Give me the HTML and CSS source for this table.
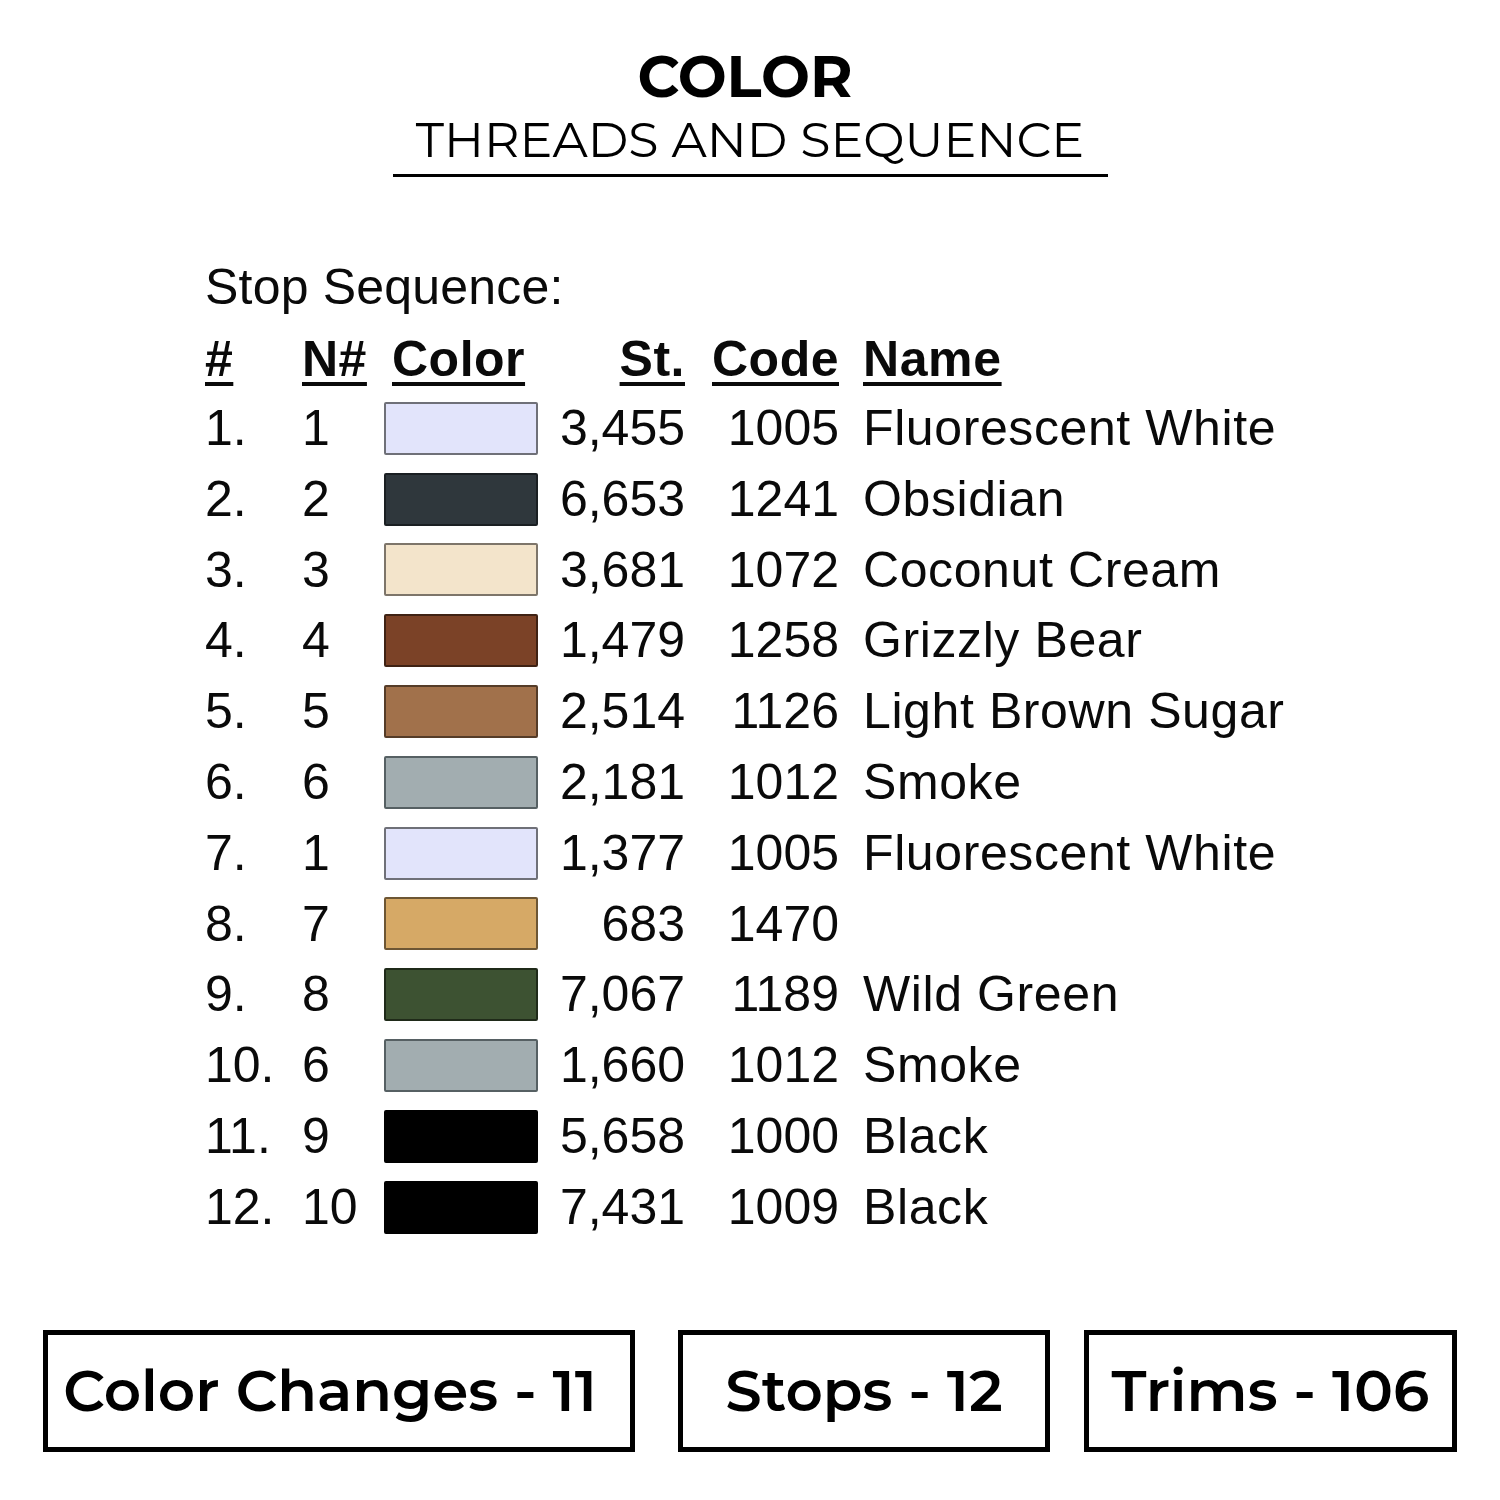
FILE: index.html
```html
<!DOCTYPE html>
<html lang="en">
<head>
<meta charset="utf-8">
<title>Color – Threads and Sequence</title>
<link rel="stylesheet" href="styles.css">
</head>
<body>
<div class="page">
  <header class="heading">
    <div class="title">COLOR</div>
    <div class="subtitle">THREADS AND SEQUENCE</div>
    <div class="rule"></div>
  </header>

  <section class="sequence">
    <div class="seq-label">Stop Sequence:</div>
    <div class="grid">
      <div class="hd c-num"><u>#</u></div>
      <div class="hd c-n"><u>N#</u></div>
      <div class="hd c-color"><u>Color</u></div>
      <div class="hd c-st"><u>St.</u></div>
      <div class="hd c-code"><u>Code</u></div>
      <div class="hd c-name"><u>Name</u></div>

      <div class="c-num">1.</div><div class="c-n">1</div><div class="c-color"><span class="sw sw-fwhite"></span></div><div class="c-st">3,455</div><div class="c-code">1005</div><div class="c-name">Fluorescent White</div>
      <div class="c-num">2.</div><div class="c-n">2</div><div class="c-color"><span class="sw sw-obsidian"></span></div><div class="c-st">6,653</div><div class="c-code">1241</div><div class="c-name">Obsidian</div>
      <div class="c-num">3.</div><div class="c-n">3</div><div class="c-color"><span class="sw sw-coconut"></span></div><div class="c-st">3,681</div><div class="c-code">1072</div><div class="c-name">Coconut Cream</div>
      <div class="c-num">4.</div><div class="c-n">4</div><div class="c-color"><span class="sw sw-grizzly"></span></div><div class="c-st">1,479</div><div class="c-code">1258</div><div class="c-name">Grizzly Bear</div>
      <div class="c-num">5.</div><div class="c-n">5</div><div class="c-color"><span class="sw sw-lbsugar"></span></div><div class="c-st">2,514</div><div class="c-code">1126</div><div class="c-name">Light Brown Sugar</div>
      <div class="c-num">6.</div><div class="c-n">6</div><div class="c-color"><span class="sw sw-smoke"></span></div><div class="c-st">2,181</div><div class="c-code">1012</div><div class="c-name">Smoke</div>
      <div class="c-num">7.</div><div class="c-n">1</div><div class="c-color"><span class="sw sw-fwhite"></span></div><div class="c-st">1,377</div><div class="c-code">1005</div><div class="c-name">Fluorescent White</div>
      <div class="c-num">8.</div><div class="c-n">7</div><div class="c-color"><span class="sw sw-1470"></span></div><div class="c-st">683</div><div class="c-code">1470</div><div class="c-name"></div>
      <div class="c-num">9.</div><div class="c-n">8</div><div class="c-color"><span class="sw sw-wgreen"></span></div><div class="c-st">7,067</div><div class="c-code">1189</div><div class="c-name">Wild Green</div>
      <div class="c-num">10.</div><div class="c-n">6</div><div class="c-color"><span class="sw sw-smoke"></span></div><div class="c-st">1,660</div><div class="c-code">1012</div><div class="c-name">Smoke</div>
      <div class="c-num">11.</div><div class="c-n">9</div><div class="c-color"><span class="sw sw-black"></span></div><div class="c-st">5,658</div><div class="c-code">1000</div><div class="c-name">Black</div>
      <div class="c-num">12.</div><div class="c-n">10</div><div class="c-color"><span class="sw sw-black"></span></div><div class="c-st">7,431</div><div class="c-code">1009</div><div class="c-name">Black</div>
    </div>
  </section>

  <section class="stats">
    <div class="stat stat-changes">Color Changes - 11</div>
    <div class="stat stat-stops">Stops - 12</div>
    <div class="stat stat-trims">Trims - 106</div>
  </section>
</div>
</body>
</html>
```

FILE: styles.css
```css
html, body {
  margin: 0;
  padding: 0;
  background: #ffffff;
}

.page {
  width: 1500px;
  height: 1500px;
  color: #000;
  overflow: hidden;
}

/* ---------- heading ---------- */
.heading {
  display: flex;
  flex-direction: column;
  align-items: center;
  padding-top: 48px;
  font-family: "Montserrat", "DejaVu Sans", sans-serif;
}

.title {
  font-size: 58px;
  line-height: 58px;
  font-weight: 700;
  margin-left: -10px;
}

.subtitle {
  margin-top: 8px;
  font-size: 49.2px;
  line-height: 50px;
  font-weight: 400;
}

.rule {
  margin-top: 10px;
  width: 715px;
  height: 3px;
  background: #000;
}

/* ---------- sequence table ---------- */
.sequence {
  margin-top: 85px;
  margin-left: 205px;
  font-family: "Liberation Sans", Arial, sans-serif;
  font-size: 50px;
  color: #0a0a0a;
}

.seq-label {
  line-height: 50px;
  height: 50px;
  letter-spacing: 0.2px;
}

.grid {
  margin-top: 13px;
  display: grid;
  grid-template-columns: 97px 82px 154px 147px 154px auto;
  grid-template-rows: 68px;
  grid-auto-rows: 70.8px;
  line-height: 70.8px;
  align-items: center;
  white-space: nowrap;
}

.hd {
  font-weight: 700;
  line-height: 68px;
  letter-spacing: 0.5px;
}

.hd u {
  text-decoration-thickness: 4px;
  text-underline-offset: 6px;
}

.c-st,
.c-code {
  text-align: right;
}

.c-name {
  padding-left: 24px;
  letter-spacing: 0.6px;
}

.hd.c-color {
  padding-left: 8px;
}

.c-color {
  display: flex;
  align-items: center;
}

.sw {
  display: block;
  box-sizing: border-box;
  width: 154px;
  height: 53px;
  border: 2px solid;
  border-radius: 2px;
}

.sw-fwhite   { background: #e2e4fb; border-color: #6f7078; }
.sw-obsidian { background: #2f373c; border-color: #1a1f22; }
.sw-coconut  { background: #f3e4cb; border-color: #7d756a; }
.sw-grizzly  { background: #7b4227; border-color: #3f2214; }
.sw-lbsugar  { background: #a1714b; border-color: #553c28; }
.sw-smoke    { background: #a2adb0; border-color: #566063; }
.sw-1470     { background: #d6a966; border-color: #6d5634; }
.sw-wgreen   { background: #3d5232; border-color: #1f2a19; }
.sw-black    { background: #000000; border-color: #000000; }

/* ---------- stats boxes ---------- */
.stats {
  margin-top: 87px;
  padding-left: 43px;
  display: flex;
  gap: 43px;
  font-family: "Montserrat", "DejaVu Sans", sans-serif;
  font-size: 58px;
  line-height: 58px;
  font-weight: 600;
}

.stat {
  box-sizing: border-box;
  height: 122px;
  border: 5px solid #000;
  display: flex;
  align-items: center;
  justify-content: center;
  white-space: nowrap;
}

.stat-changes { width: 592px; padding-right: 18px; }
.stat-stops   { width: 372px; margin-right: -9px; }
.stat-trims   { width: 373px; }
```
